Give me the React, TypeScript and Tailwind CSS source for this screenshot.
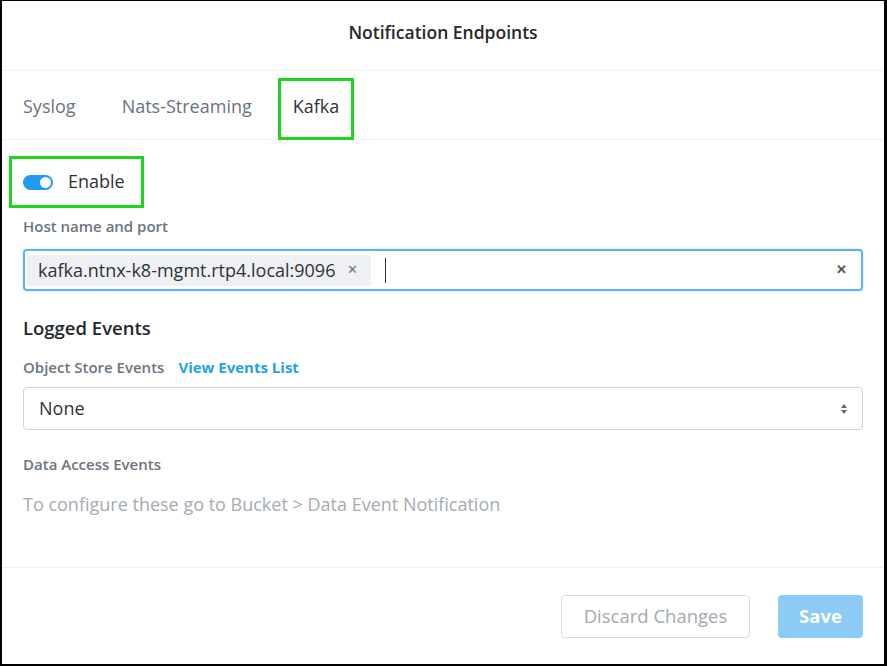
import React from "react";

const font = { fontFamily: "'Open Sans', 'Noto Sans', sans-serif" };

const Toggle = () => (
  <span className="relative inline-flex h-[15px] w-[30px] items-center rounded-full bg-[#1e9bf0]">
    <span className="absolute right-[2px] h-[11px] w-[11px] rounded-full bg-white" />
  </span>
);

const App = () => {
  return (
    <div
      className="box-border flex h-[666px] w-[887px] flex-col border-t border-r-[3px] border-b-2 border-l-2 border-black bg-white text-[#2f3338]"
      style={font}
    >
      <header className="flex h-[70px] shrink-0 items-center justify-center border-b border-[#eff0f2]">
        <h1 className="mt-[-6px] text-[17.5px] font-semibold text-[#25282c]">Notification Endpoints</h1>
      </header>

      <nav className="flex h-[69px] shrink-0 items-center border-b border-[#eff0f2] pl-[21px] text-[18px]">
        <span className="mt-[2px] text-[#69737f]">Syslog</span>
        <span className="ml-[46px] mt-[2px] text-[#69737f]">Nats-Streaming</span>
        <span className="ml-[26px] mt-[2px] mb-[-6px] flex h-[62px] items-center border-[3px] border-[#1fd41f] px-[12px] pb-[6px] text-[#2f3338]">
          Kafka
        </span>
      </nav>

      <main className="flex flex-1 flex-col px-[21px]">
        <div className="mt-[16px] -ml-[14px] flex h-[52px] w-[135px] items-center gap-[15px] border-[3px] border-[#1fd41f] pl-[11px] text-[18px]">
          <Toggle />
          <span className="-mt-[2px]">Enable</span>
        </div>

        <label className="mt-[9px] text-[15px] leading-[18px] font-semibold text-[#6c7480]">Host name and port</label>
        <div className="mt-[14px] flex h-[42px] items-center rounded-[4px] border-2 border-[#5fb3ee] pl-[2px] pr-[14px] shadow-[0_0_2px_rgba(30,155,240,0.4)]">
          <span className="flex h-[31px] items-center gap-[12px] rounded-[3px] bg-[#eef0f3] pl-[11px] pr-[13px] text-[18px] text-[#2f3338]">
            kafka.ntnx-k8-mgmt.rtp4.local:9096
            <span className="text-[13px] text-[#6c7480]">✕</span>
          </span>
          <span className="ml-[14px] h-[25px] w-px bg-[#2f3338]" />
          <span className="ml-auto text-[13px] font-bold text-[#4c535c]">✕</span>
        </div>

        <h2 className="mt-[26px] text-[18.5px] leading-[22px] font-semibold text-[#25282c]">Logged Events</h2>
        <div className="mt-[19px] flex gap-[14px] text-[15px] leading-[18px] font-semibold">
          <span className="text-[#6c7480]">Object Store Events</span>
          <span className="font-bold text-[#22a2ee]">View Events List</span>
        </div>
        <div className="mt-[11px] flex h-[43px] items-center justify-between rounded-[4px] border border-[#cfd3d8] pl-[15px] pr-[14px] text-[18px]">
          <span>None</span>
          <svg width="8" height="12" viewBox="0 0 8 12" fill="#5f6670">
            <path d="M4 1 7 5H1z" />
            <path d="M4 11 7 7H1z" />
          </svg>
        </div>

        <span className="mt-[25px] text-[15px] leading-[18px] font-semibold text-[#6c7480]">Data Access Events</span>
        <p className="mt-[20px] text-[18px] leading-[22px] text-[#a4abb3]">
          To configure these go to Bucket &gt; Data Event Notification
        </p>
      </main>

      <footer className="flex h-[97px] shrink-0 items-center justify-end gap-[28px] border-t border-[#eff0f2] pr-[21px] text-[18.5px]">
        <button type="button" className="h-[43px] w-[189px] rounded-[4px] border border-[#d9dce1] text-[#a3a9b1]">
          Discard Changes
        </button>
        <button type="button" className="h-[43px] w-[85px] rounded-[4px] bg-[#8ccbf5] font-bold text-white">
          Save
        </button>
      </footer>
    </div>
  );
};

export default App;
